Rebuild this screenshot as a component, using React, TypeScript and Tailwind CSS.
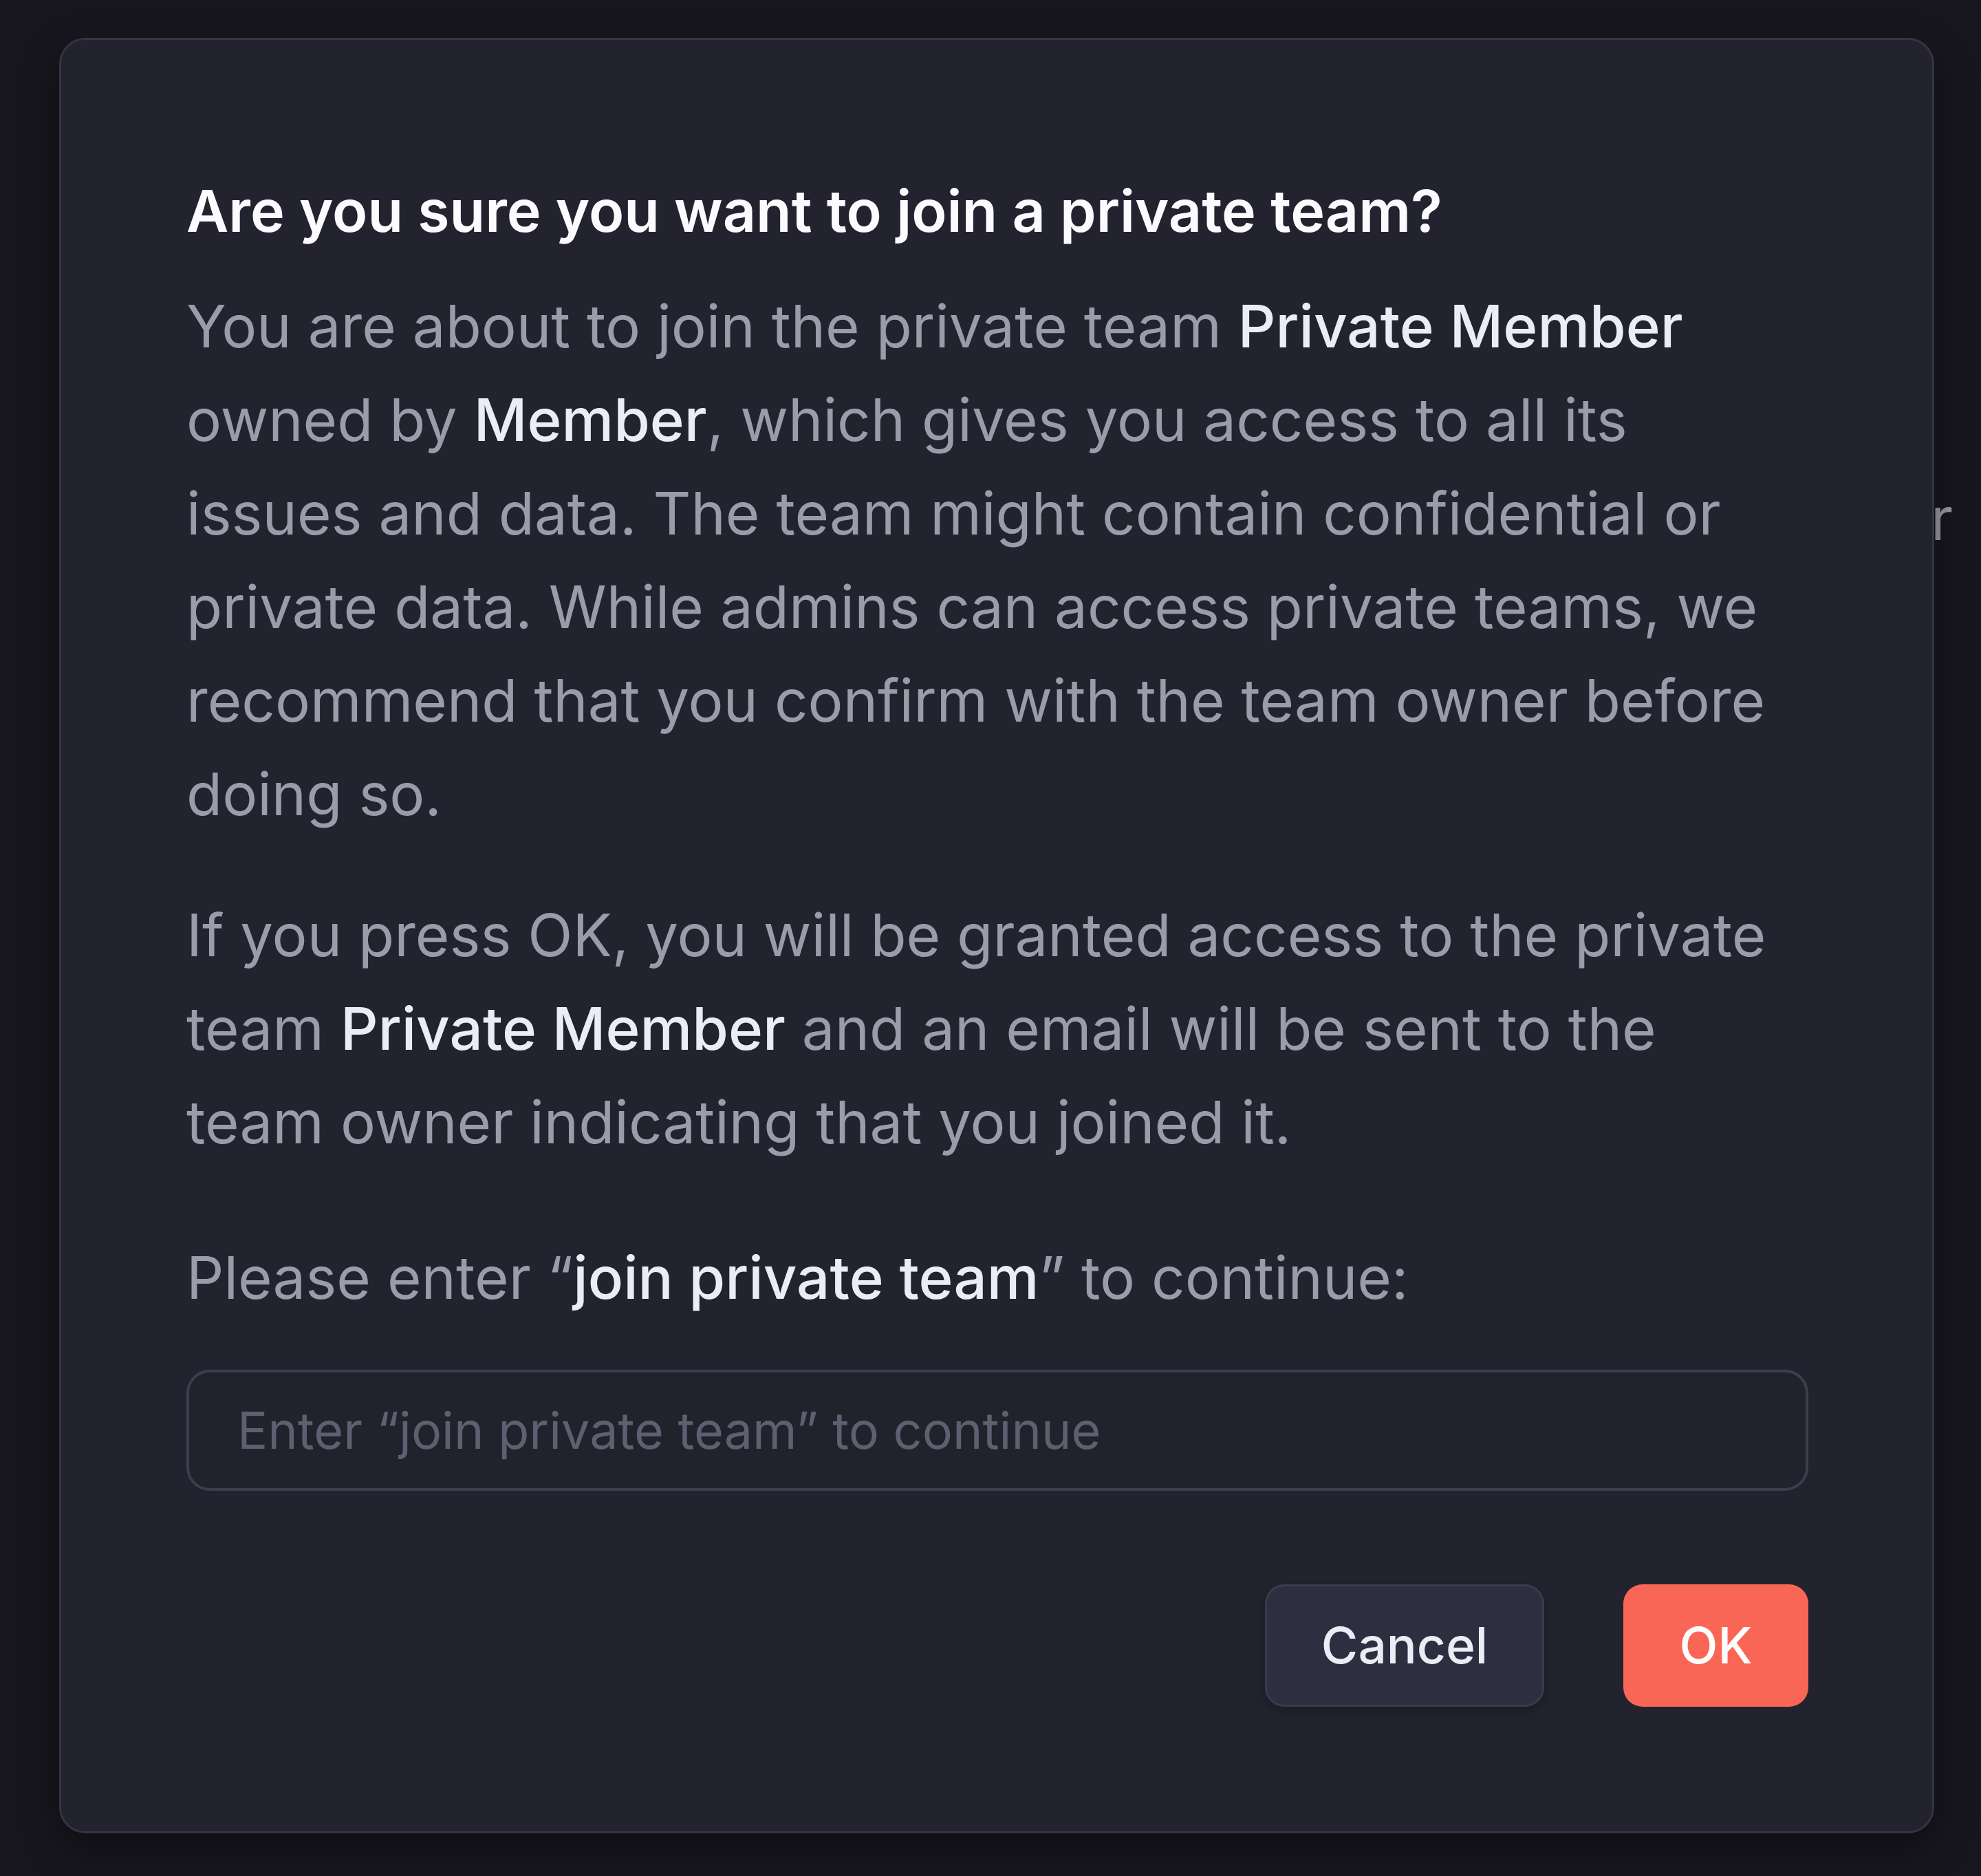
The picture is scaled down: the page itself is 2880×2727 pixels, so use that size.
import React, { useState } from "react";

const font = { fontFamily: "Inter, 'Noto Sans', sans-serif" };

export default function App() {
  const [value, setValue] = useState("");

  return (
    <div className="relative h-[2727px] w-[2880px] overflow-hidden bg-[#18171f] pt-[55px] pl-[86px]" style={font}>
      {/* background page text peeking out behind the dialog */}
      <span className="absolute left-[2756px] top-[686px] text-[85.2px] leading-[136px] text-[#9d9dab]">or</span>

      <div className="relative z-10 flex w-[2726px] h-[2610px] flex-col rounded-[38px] border-[3px] border-[#353542] bg-[#23232f] pl-[182px] pr-[180px] pt-[192px] shadow-[0_20px_60px_rgba(0,0,0,0.45)]">
        <h2 className="text-[84.3px] font-semibold leading-[112px] text-[#fbfbff]">
          Are you sure you want to join a private team?
        </h2>

        <p className="mt-[44px] text-[85.2px] leading-[136px] text-[#9b9ba9]">
          You are about to join the private team <strong className="font-medium text-[#ececf5]">Private Member</strong> owned
          by <strong className="font-medium text-[#ececf5]">Member</strong>, which gives you access to all its issues and
          data. The team might contain confidential or private data. While admins can access private teams, we recommend that
          you confirm with the team owner before doing so.
        </p>

        <p className="mt-[69px] text-[85.2px] leading-[136px] text-[#9b9ba9]">
          If you press OK, you will be granted access to the private team{" "}
          <strong className="font-medium text-[#ececf5]">Private Member</strong> and an email will be sent to the team owner
          indicating that you joined it.
        </p>

        <label className="mt-[90px] text-[85.2px] leading-[136px] text-[#9b9ba9]">
          Please enter “<span className="font-medium text-[#ececf5]">join private team</span>” to continue:
        </label>

        <input
          value={value}
          onChange={(e) => setValue(e.target.value)}
          placeholder="Enter “join private team” to continue"
          className="mt-[66px] h-[176px] w-full rounded-[34px] border-[4px] border-[#3c3d4e] bg-[#22222d] px-[70px] text-[73.7px] text-[#ececf5] placeholder:text-[#5f5f71] outline-none"
        />

        <div className="mt-[136px] flex justify-end gap-[115px]">
          <button className="h-[178px] w-[406px] rounded-[28px] border-[3px] border-[#3a3b4d] bg-[#2e2e40] text-[73px] font-medium text-[#ececf5] shadow-[0_6px_16px_rgba(0,0,0,0.25)]">
            Cancel
          </button>
          <button className="h-[178px] w-[269px] rounded-[28px] bg-[#fa6656] text-[73px] font-medium text-white">
            OK
          </button>
        </div>
      </div>
    </div>
  );
}
